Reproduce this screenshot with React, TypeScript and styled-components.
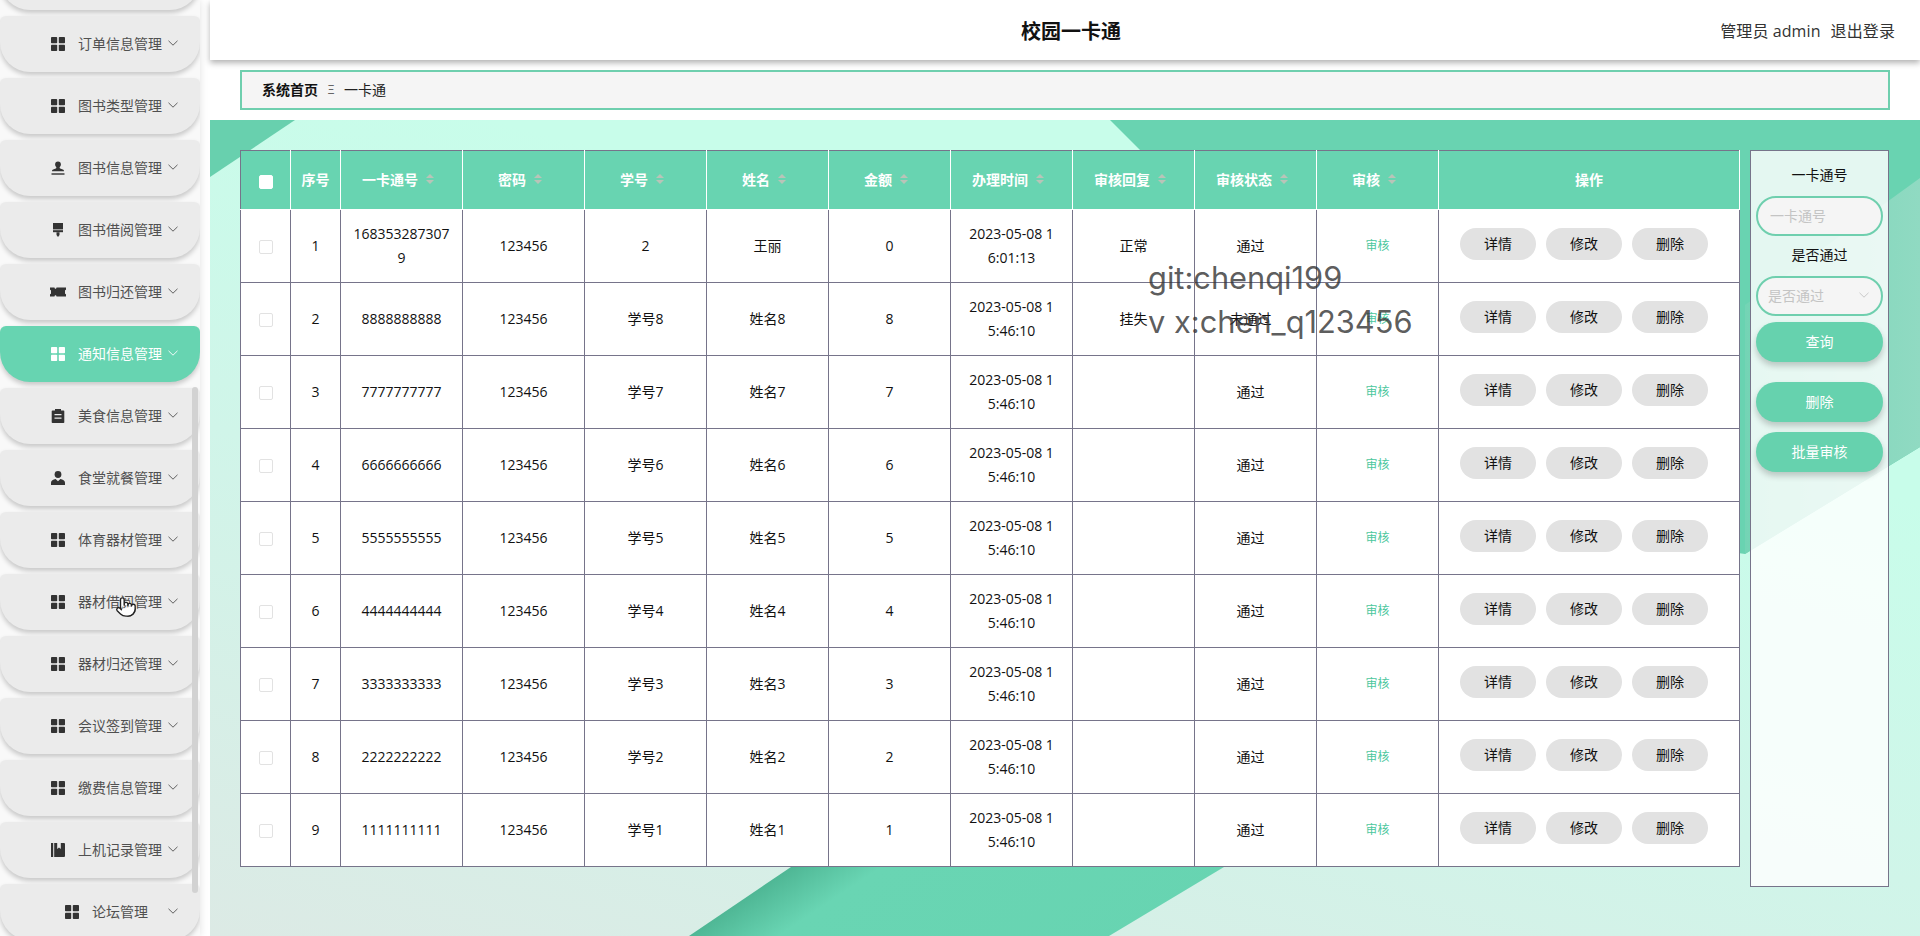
import React from "react";
import styled, { createGlobalStyle } from "styled-components";
import { Pointer } from "lucide-react";

const FONT = `"Open Sans", "Noto Sans CJK SC", sans-serif`;

const GlobalStyle = createGlobalStyle`
  html, body {
    margin: 0;
    height: 936px;
    overflow: hidden;
    background: #fff;
    font-family: ${FONT};
  }
  * { box-sizing: border-box; }
`;

type IconName = "grid" | "stamp" | "brush" | "ticket" | "order" | "person" | "book";

const Icon: React.FC<{ name: IconName }> = ({ name }) => {
  const shapes: Record<IconName, React.ReactNode> = {
    grid: (
      <>
        <rect x="0" y="0" width="6.2" height="6.2" rx="0.8" />
        <rect x="7.8" y="0" width="6.2" height="6.2" rx="0.8" />
        <rect x="0" y="7.8" width="6.2" height="6.2" rx="0.8" />
        <rect x="7.8" y="7.8" width="6.2" height="6.2" rx="0.8" />
      </>
    ),
    stamp: (
      <>
        <path d="M7 0.5a2.9 2.9 0 0 1 2.9 2.9c0 1.1-.6 1.8-1.1 2.6-.3.5-.2 1.3.4 1.6l2.6 1c.7.3 1.2.8 1.2 1.6H1c0-.8.5-1.3 1.2-1.6l2.6-1c.6-.3.7-1.1.4-1.6C4.7 5.2 4.100 4.500 4.100 3.400A2.900 2.900 0 0 1 7 0.500z" />
        <rect x="0.5" y="12.3" width="13" height="1.4" />
      </>
    ),
    brush: (
      <>
        <rect x="2" y="0" width="10" height="6.400" />
        <rect x="2" y="7.200" width="10" height="2" />
        <path d="M5.500 9.200h3v2.800L7 14l-1.500-2z" />
      </>
    ),
    ticket: (
      <path d="M-1 2.500h4.500c0 .9.6 1.300 1 1.300s1-.4 1-1.300H15v2.300c-1 .3-1 .8-1 1.200v2c0 .4 0 .9 1 1.200v2.300H5.500c0-.9-.6-1.300-1-1.300s-1 .4-1 1.300H-1V9.200c1-.3 1-.8 1-1.200V6c0-.4 0-.9-1-1.200z" />
    ),
    order: (
      <path
        fillRule="evenodd"
        d="M4 0h6v1.500h2.500a.8.8 0 0 1 .8.8v11a.8.8 0 0 1-.8.8h-11a.8.8 0 0 1-.8-.8v-11a.8.8 0 0 1 .8-.8H4zM3.500 5v1.300h7V5zm0 3.500v1.300h7V8.500z"
      />
    ),
    person: (
      <>
        <circle cx="7" cy="3.500" r="3.400" />
        <path d="M0 14v-2.200c0-2 2.200-3.300 4.600-3.700L7 10.200l2.400-2.100c2.400.4 4.600 1.700 4.600 3.700V14z" />
      </>
    ),
    book: (
      <path d="M0 0h2.200v14H0zM3.200 0h3v6l1.800-1.500L9.800 6V0h3.200a1 1 0 0 1 1 1v12a1 1 0 0 1-1 1H3.200z" />
    ),
  };
  return (
    <IconSvg viewBox="0 0 14 14" fill="currentColor">
      {shapes[name]}
    </IconSvg>
  );
};

const Chevron = () => (
  <ChevronSvg viewBox="0 0 10 6" fill="none" stroke="currentColor" strokeWidth="0.9">
    <path d="M0.5 0.800L5 5.200l4.500-4.400" />
  </ChevronSvg>
);

const menu: { label: string; icon: IconName }[] = [
  { label: "订单信息管理", icon: "grid" },
  { label: "图书类型管理", icon: "grid" },
  { label: "图书信息管理", icon: "stamp" },
  { label: "图书借阅管理", icon: "brush" },
  { label: "图书归还管理", icon: "ticket" },
  { label: "通知信息管理", icon: "grid" },
  { label: "美食信息管理", icon: "order" },
  { label: "食堂就餐管理", icon: "person" },
  { label: "体育器材管理", icon: "grid" },
  { label: "器材借阅管理", icon: "grid" },
  { label: "器材归还管理", icon: "grid" },
  { label: "会议签到管理", icon: "grid" },
  { label: "缴费信息管理", icon: "grid" },
  { label: "上机记录管理", icon: "book" },
  { label: "论坛管理", icon: "grid" },
];

const columns = [
  { title: "序号" },
  { title: "一卡通号", sort: true },
  { title: "密码", sort: true },
  { title: "学号", sort: true },
  { title: "姓名", sort: true },
  { title: "金额", sort: true },
  { title: "办理时间", sort: true },
  { title: "审核回复", sort: true },
  { title: "审核状态", sort: true },
  { title: "审核", sort: true },
  { title: "操作" },
];

const rows = [
  { card: "168353287307\n9", no: "2", name: "王丽", money: "0", time: "2023-05-08 1\n6:01:13", reply: "正常", status: "通过" },
  { card: "8888888888", no: "学号8", name: "姓名8", money: "8", time: "2023-05-08 1\n5:46:10", reply: "挂失", status: "未通过" },
  { card: "7777777777", no: "学号7", name: "姓名7", money: "7", time: "2023-05-08 1\n5:46:10", reply: "", status: "通过" },
  { card: "6666666666", no: "学号6", name: "姓名6", money: "6", time: "2023-05-08 1\n5:46:10", reply: "", status: "通过" },
  { card: "5555555555", no: "学号5", name: "姓名5", money: "5", time: "2023-05-08 1\n5:46:10", reply: "", status: "通过" },
  { card: "4444444444", no: "学号4", name: "姓名4", money: "4", time: "2023-05-08 1\n5:46:10", reply: "", status: "通过" },
  { card: "3333333333", no: "学号3", name: "姓名3", money: "3", time: "2023-05-08 1\n5:46:10", reply: "", status: "通过" },
  { card: "2222222222", no: "学号2", name: "姓名2", money: "2", time: "2023-05-08 1\n5:46:10", reply: "", status: "通过" },
  { card: "1111111111", no: "学号1", name: "姓名1", money: "1", time: "2023-05-08 1\n5:46:10", reply: "", status: "通过" },
];

export default function App() {
  return (
    <Page>
      <GlobalStyle />
      <Sidebar>
        <MenuList>
          <MenuItem />
          {menu.map((item) => (
            <MenuItem key={item.label} $active={item.label === "通知信息管理"}>
              <Icon name={item.icon} />
              <MenuLabel>{item.label}</MenuLabel>
              <Chevron />
            </MenuItem>
          ))}
        </MenuList>
        <ScrollThumb />
        <HandCursor>
          <Pointer size={22} fill="#fff" color="#222" strokeWidth={1.5} />
        </HandCursor>
      </Sidebar>
      <Main>
        <TopBar>
          <span />
          <Title>校园一卡通</Title>
          <UserBox>
            <span>管理员 admin</span>
            <span>退出登录</span>
          </UserBox>
        </TopBar>
        <Breadcrumb>
          <strong>系统首页</strong>
          <Separator>Ξ</Separator>
          <span>一卡通</span>
        </Breadcrumb>
        <Content>
          <Backdrop viewBox="0 0 1710 816" preserveAspectRatio="none">
            <defs>
              <linearGradient
                id="bandEdge"
                gradientUnits="userSpaceOnUse"
                x1="531"
                y1="781"
                x2="730"
                y2="1078"
              >
                <stop offset="0" stopColor="#4fb795" />
                <stop offset="0.14" stopColor="#69d5b3" />
                <stop offset="0.85" stopColor="#67d4b1" />
                <stop offset="1" stopColor="#5cc5a3" />
              </linearGradient>
              <linearGradient id="paleBand" x1="0" x2="1" y1="0" y2="0">
                <stop offset="0" stopColor="#74d4b5" />
                <stop offset="1" stopColor="#90dac2" />
              </linearGradient>
            </defs>
            <polygon points="0,0 85,0 0,57" fill="#68d0ae" />
            <polygon points="900,0 1710,0 1710,327 1535,434 1300,400" fill="#69d3b1" />
            <polygon points="1710,58 1535,185 1535,434 1710,327" fill="url(#paleBand)" />
            <polygon points="581,747 1014,747 899,816 479,816" fill="url(#bandEdge)" />
          </Backdrop>
          <DataTable>
            <colgroup>
              <col width={50} />
              <col width={50} />
              {Array.from({ length: 9 }).map((_, i) => (
                <col key={i} width={122} />
              ))}
              <col width={301} />
            </colgroup>
            <thead>
              <tr>
                <HeadCell>
                  <CheckBox $head />
                </HeadCell>
                {columns.map((col) => (
                  <HeadCell key={col.title}>
                    <HeadInner>
                      {col.title}
                      {col.sort && (
                        <SortCaret>
                          <i />
                          <i />
                        </SortCaret>
                      )}
                    </HeadInner>
                  </HeadCell>
                ))}
              </tr>
            </thead>
            <tbody>
              {rows.map((row, i) => (
                <tr key={i}>
                  <Cell>
                    <CheckBox />
                  </Cell>
                  <Cell>{i + 1}</Cell>
                  <Cell>{row.card}</Cell>
                  <Cell>123456</Cell>
                  <Cell>{row.no}</Cell>
                  <Cell>{row.name}</Cell>
                  <Cell>{row.money}</Cell>
                  <Cell>{row.time}</Cell>
                  <Cell>{row.reply}</Cell>
                  <Cell $shift>{row.status}</Cell>
                  <Cell>
                    <AuditLink>审核</AuditLink>
                  </Cell>
                  <Cell>
                    <Actions>
                      <ActionButton>详情</ActionButton>
                      <ActionButton>修改</ActionButton>
                      <ActionButton>删除</ActionButton>
                    </Actions>
                  </Cell>
                </tr>
              ))}
            </tbody>
          </DataTable>
          <SearchPanel>
            <FieldLabel>一卡通号</FieldLabel>
            <TextInput placeholder="一卡通号" />
            <FieldLabel>是否通过</FieldLabel>
            <SelectBox>
              <span>是否通过</span>
              <Chevron />
            </SelectBox>
            <PanelButton $gap={6}>查询</PanelButton>
            <PanelButton $gap={20}>删除</PanelButton>
            <PanelButton $gap={10}>批量审核</PanelButton>
          </SearchPanel>
        </Content>
        <Watermark>
          <div>git:chenqi199</div>
          <div>v x:chen_q123456</div>
        </Watermark>
      </Main>
    </Page>
  );
}

const Page = styled.div`
  display: grid;
  grid-template-columns: 210px 1fr;
  width: 1920px;
  height: 936px;
  overflow: hidden;
`;

const Sidebar = styled.aside`
  position: relative;
  width: 200px;
  height: 936px;
  background: #f9f9f9;
  box-shadow: 0 0 8px rgba(0, 0, 0, 0.12);
  overflow: hidden;
`;

const MenuList = styled.div`
  display: flex;
  flex-direction: column;
  gap: 6px;
  margin-top: -46px;
`;

const MenuItem = styled.div<{ $active?: boolean }>`
  position: relative;
  flex: none;
  display: flex;
  align-items: center;
  justify-content: center;
  gap: 13px;
  height: 56px;
  padding-left: 13px;
  border-radius: 6px 6px 30px 30px;
  background: ${(p) => (p.$active ? "#67d4b1" : "#ebebeb")};
  color: ${(p) => (p.$active ? "#fff" : "#505050")};
  box-shadow: 0 3px 5px rgba(0, 0, 0, 0.2);
  font-size: 14px;

  & > svg:first-child {
    color: ${(p) => (p.$active ? "#fff" : "#333")};
  }
`;

const MenuLabel = styled.span`
  position: relative;
  top: -1px;
`;

const IconSvg = styled.svg`
  flex: none;
  width: 14px;
  height: 14px;
  overflow: visible;
`;

const ChevronSvg = styled.svg`
  position: absolute;
  right: 22px;
  top: 50%;
  width: 10px;
  height: 6px;
  margin-top: -4px;
  color: inherit;
`;

const ScrollThumb = styled.div`
  position: absolute;
  top: 387px;
  left: 192px;
  width: 6px;
  height: 506px;
  border-radius: 3px;
  background: #d2d2d2;
`;

const HandCursor = styled.div`
  position: absolute;
  top: 596px;
  left: 115px;
  display: flex;
`;

const Main = styled.main`
  position: relative;
  display: flex;
  flex-direction: column;
  min-width: 0;
`;

const TopBar = styled.header`
  position: relative;
  z-index: 2;
  flex: none;
  display: grid;
  grid-template-columns: 1fr auto 1fr;
  align-items: center;
  height: 60px;
  padding: 0 25px 0 37px;
  background: #fff;
  box-shadow: 0 3px 6px rgba(0, 0, 0, 0.3);
`;

const Title = styled.div`
  font-size: 20px;
  font-weight: 700;
  color: #111;
`;

const UserBox = styled.div`
  display: flex;
  justify-content: flex-end;
  gap: 10px;
  font-size: 16px;
  color: #333;
  letter-spacing: 0.1px;
`;

const Breadcrumb = styled.nav`
  flex: none;
  display: flex;
  align-items: center;
  height: 40px;
  margin: 10px 30px 10px;
  padding: 0 0 2px 20px;
  border: 2px solid #6fcfae;
  background: #f5f5f5;
  font-size: 14px;
  color: #222;

  strong {
    color: #111;
  }
`;

const Separator = styled.span`
  width: 26px;
  text-align: center;
  font-size: 12px;
  color: #666;
`;

const Content = styled.section`
  position: relative;
  flex: 1;
  display: flex;
  align-items: flex-start;
  gap: 10px;
  padding: 30px 30px 0;
  background: linear-gradient(15deg, #dceae5 0%, #d0f5e9 40%, #c8fdea 70%);
`;

const Backdrop = styled.svg`
  position: absolute;
  left: 0;
  top: 0;
  width: 100%;
  height: 100%;
`;

const DataTable = styled.table`
  position: relative;
  flex: none;
  width: 1499px;
  border-collapse: collapse;
  table-layout: fixed;
  background: #fff;
  font-size: 14px;
  color: #111;
`;

const HeadCell = styled.th`
  height: 59px;
  padding: 0;
  border: 1px solid #fff;
  border-top-color: #76748a;
  background: #68d4b1;
  color: #fff;
  font-weight: 700;
  text-align: center;

  &:first-child {
    border-left-color: #76748a;
  }
`;

const HeadInner = styled.span`
  display: inline-flex;
  align-items: center;
  justify-content: center;
  position: relative;
  top: -1px;
`;

const SortCaret = styled.span`
  display: inline-flex;
  flex-direction: column;
  gap: 2px;
  margin: 0 7px 0 8px;

  i {
    display: block;
    border-left: 4px solid transparent;
    border-right: 4px solid transparent;
  }
  i:first-child {
    border-bottom: 4px solid #b9c4b8;
  }
  i:last-child {
    border-top: 4px solid #b9c4b8;
  }
`;

const Cell = styled.td<{ $shift?: boolean }>`
  height: 73px;
  padding: 0 ${(p) => (p.$shift ? "18px" : "8px")} 1px 8px;
  border: 1px solid #76748a;
  text-align: center;
  line-height: 24px;
  white-space: pre-line;
`;

const CheckBox = styled.span<{ $head?: boolean }>`
  display: inline-block;
  width: 14px;
  height: 14px;
  border: 1px solid ${(p) => (p.$head ? "#fff" : "#e2e2e2")};
  border-radius: 2px;
  background: #fff;
  vertical-align: middle;
`;

const AuditLink = styled.span`
  font-size: 12px;
  color: #4cc79d;
`;

const Actions = styled.div`
  display: flex;
  justify-content: flex-start;
  gap: 10px;
  margin: -3px 0 0 13px;
`;

const ActionButton = styled.button`
  width: 76px;
  height: 32px;
  padding: 0 0 2px;
  border: 0;
  border-radius: 16px;
  background: #e2e2e2;
  color: #111;
  font: 14px ${FONT};
`;

const SearchPanel = styled.div`
  position: relative;
  flex: none;
  display: flex;
  flex-direction: column;
  width: 139px;
  height: 737px;
  padding: 5px;
  border: 1px solid #76748a;
  background: rgba(255, 255, 255, 0.82);
`;

const FieldLabel = styled.div`
  height: 40px;
  line-height: 38px;
  text-align: center;
  font-size: 14px;
  color: #111;
`;

const TextInput = styled.input`
  width: 100%;
  height: 40px;
  padding: 0 12px 2px;
  border: 2px solid #6fcfae;
  border-radius: 20px;
  background: #f5f5f5;
  outline: none;
  font: 14px ${FONT};

  &::placeholder {
    color: #c4c4c4;
  }
`;

const SelectBox = styled.div`
  position: relative;
  display: flex;
  align-items: center;
  height: 40px;
  padding: 0 0 2px 10px;
  border: 2px solid #6fcfae;
  border-radius: 20px;
  background: #f5f5f5;
  font-size: 14px;
  color: #c4c4c4;

  svg {
    right: 12px;
  }
`;

const PanelButton = styled.button<{ $gap: number }>`
  flex: none;
  height: 40px;
  margin-top: ${(p) => p.$gap}px;
  padding: 0 0 2px;
  border: 0;
  border-radius: 20px;
  background: #66d2ae;
  box-shadow: 0 4px 6px rgba(0, 0, 0, 0.2);
  color: #fff;
  font: 14px ${FONT};
`;

const Watermark = styled.div`
  position: absolute;
  z-index: 3;
  top: 256px;
  left: 938px;
  font-family: Inter, sans-serif;
  font-size: 30.8px;
  line-height: 44px;
  color: rgba(50, 50, 50, 0.8);
  white-space: nowrap;
  pointer-events: none;
`;
